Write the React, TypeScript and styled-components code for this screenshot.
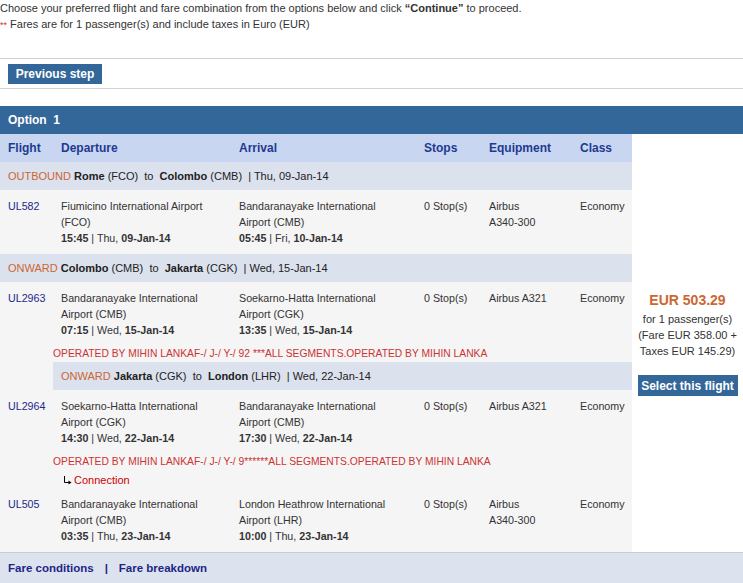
import React from 'react'
import styled, { createGlobalStyle } from 'styled-components'

const GlobalStyle = createGlobalStyle`
  body {
    margin: 0;
    background: #fff;
    font-family: "Liberation Sans", Arial, sans-serif;
    font-size: 11px;
    color: #333;
  }
`

const Page = styled.div`
  width: 743px;
`

const Intro = styled.div`
  line-height: 16px;
  color: #333;
  white-space: nowrap;
`

const Stars = styled.span`
  color: #cc3333;
  font-size: 9px;
`

const StepBar = styled.div`
  margin: 25px 0 17px;
  border-top: 1px solid #d2d2d2;
  border-bottom: 1px solid #d2d2d2;
  padding: 5px 8px 4px;
`

const BlueButton = styled.button<{ $w: number; $h: number }>`
  display: block;
  width: ${p => p.$w}px;
  height: ${p => p.$h}px;
  padding: 0;
  border: none;
  background: #336699;
  color: #fff;
  font-family: "Liberation Sans", Arial, sans-serif;
  font-size: 12px;
  font-weight: bold;
  cursor: pointer;
`

const OptionBar = styled.div`
  height: 28px;
  line-height: 28px;
  padding: 0 8px;
  background: #336699;
  color: #fff;
  font-size: 12px;
  font-weight: bold;
  white-space: pre;
`

const Body = styled.div`
  display: flex;
`

const Table = styled.div`
  width: 632px;
  background: #f5f5f5;
`

const Cols = styled.div`
  display: grid;
  grid-template-columns: 53px 178px 185px 65px 91px 52px;
  padding-left: 8px;
`

const HeadRow = styled(Cols)`
  height: 28px;
  align-items: center;
  background: #c8d6f2;
  color: #1f3a8f;
  font-size: 12px;
  font-weight: bold;
`

const FlightRow = styled(Cols)`
  padding: 8px 0 8px 8px;
  line-height: 16px;
  font-size: 10.7px;
  align-items: start;
  white-space: nowrap;
`

const FlightNo = styled.span`
  color: #24288c;
`

const SegmentHeader = styled.div<{ $inset?: boolean }>`
  height: 28px;
  line-height: 28px;
  margin-left: ${p => (p.$inset ? '53px' : '0')};
  padding-left: 8px;
  background: #dce1ee;
  color: #222;
  white-space: pre;
`

const Kind = styled.span`
  color: #cc6633;
`

const Note = styled.div`
  padding-left: 53px;
  line-height: 16px;
  font-size: 10.3px;
  color: #cc3333;
  white-space: nowrap;
`

const Connection = styled.div`
  margin-top: 2px;
  padding-left: 63px;
  line-height: 16px;
  color: #cc0000;
  display: flex;
  align-items: center;
  gap: 2px;
`

const PriceCol = styled.div`
  flex: 1;
  display: flex;
  flex-direction: column;
  align-items: center;
  justify-content: center;
  text-align: center;
  line-height: 16px;
  color: #333;
`

const Price = styled.div`
  color: #cc6633;
  font-size: 14px;
  font-weight: bold;
  line-height: 20px;
  margin-bottom: 1px;
`

const SelectWrap = styled.div`
  margin-top: 16px;
`

const Footer = styled.div`
  height: 30px;
  border-top: 1px solid #cccccc;
  background: #dde2ef;
  display: flex;
  align-items: center;
  padding: 0 8px;
  font-size: 11.5px;
  font-weight: bold;
  color: #1c2686;
`

const Sep = styled.span`
  margin: 0 11px;
`

interface Flight {
  no: string
  dep: string[]
  depTime: string
  depDay: string
  depDate: string
  arr: string[]
  arrTime: string
  arrDay: string
  arrDate: string
  equip: string[]
}

function TimeLine({ time, day, date }: { time: string; day: string; date: string }) {
  return (
    <div>
      <b>{time}</b>{'  | '}{day}, <b>{date}</b>
    </div>
  )
}

function Row({ f }: { f: Flight }) {
  return (
    <FlightRow>
      <FlightNo>{f.no}</FlightNo>
      <div>
        {f.dep.map(l => <div key={l}>{l}</div>)}
        <TimeLine time={f.depTime} day={f.depDay} date={f.depDate} />
      </div>
      <div>
        {f.arr.map(l => <div key={l}>{l}</div>)}
        <TimeLine time={f.arrTime} day={f.arrDay} date={f.arrDate} />
      </div>
      <div>0 Stop(s)</div>
      <div>{f.equip.map(l => <div key={l}>{l}</div>)}</div>
      <div>Economy</div>
    </FlightRow>
  )
}

function Segment({ kind, from, fromCode, to, toCode, date, inset }: {
  kind: string; from: string; fromCode: string; to: string; toCode: string; date: string; inset?: boolean
}) {
  return (
    <SegmentHeader $inset={inset}>
      <Kind>{kind}</Kind>{' '}<b>{from}</b>{` (${fromCode})  to  `}<b>{to}</b>{` (${toCode})  | ${date}`}
    </SegmentHeader>
  )
}

const CMB = ['Bandaranayake International', 'Airport (CMB)']
const CGK = ['Soekarno-Hatta International', 'Airport (CGK)']

export default function App() {
  return (
    <Page>
      <GlobalStyle />
      <Intro>
        <div>Choose your preferred flight and fare combination from the options below and click <b>“Continue”</b> to proceed.</div>
        <div><Stars>**</Stars> Fares are for 1 passenger(s) and include taxes in Euro (EUR)</div>
      </Intro>

      <StepBar>
        <BlueButton $w={94} $h={20}>Previous step</BlueButton>
      </StepBar>

      <OptionBar>Option  1</OptionBar>

      <Body>
        <Table>
          <HeadRow>
            <div>Flight</div>
            <div>Departure</div>
            <div>Arrival</div>
            <div>Stops</div>
            <div>Equipment</div>
            <div>Class</div>
          </HeadRow>

          <Segment kind="OUTBOUND" from="Rome" fromCode="FCO" to="Colombo" toCode="CMB" date="Thu, 09-Jan-14" />
          <Row f={{
            no: 'UL582', dep: ['Fiumicino International Airport', '(FCO)'], depTime: '15:45', depDay: 'Thu', depDate: '09-Jan-14',
            arr: CMB, arrTime: '05:45', arrDay: 'Fri', arrDate: '10-Jan-14', equip: ['Airbus', 'A340-300'],
          }} />

          <Segment kind="ONWARD" from="Colombo" fromCode="CMB" to="Jakarta" toCode="CGK" date="Wed, 15-Jan-14" />
          <Row f={{
            no: 'UL2963', dep: CMB, depTime: '07:15', depDay: 'Wed', depDate: '15-Jan-14',
            arr: CGK, arrTime: '13:35', arrDay: 'Wed', arrDate: '15-Jan-14', equip: ['Airbus A321'],
          }} />
          <Note>OPERATED BY MIHIN LANKAF-/ J-/ Y-/ 92 ***ALL SEGMENTS.OPERATED BY MIHIN LANKA</Note>

          <Segment inset kind="ONWARD" from="Jakarta" fromCode="CGK" to="London" toCode="LHR" date="Wed, 22-Jan-14" />
          <Row f={{
            no: 'UL2964', dep: CGK, depTime: '14:30', depDay: 'Wed', depDate: '22-Jan-14',
            arr: CMB, arrTime: '17:30', arrDay: 'Wed', arrDate: '22-Jan-14', equip: ['Airbus A321'],
          }} />
          <Note>OPERATED BY MIHIN LANKAF-/ J-/ Y-/ 9******ALL SEGMENTS.OPERATED BY MIHIN LANKA</Note>
          <Connection>
            <svg width="9" height="9" viewBox="0 0 9 9">
              <path d="M1.5 0 V6.5 H6" stroke="#000" strokeWidth="1" fill="none" />
              <polygon points="5.5,4.5 8.5,6.5 5.5,8.5" fill="#000" />
            </svg>
            Connection
          </Connection>

          <Row f={{
            no: 'UL505', dep: CMB, depTime: '03:35', depDay: 'Thu', depDate: '23-Jan-14',
            arr: ['London Heathrow International', 'Airport (LHR)'], arrTime: '10:00', arrDay: 'Thu', arrDate: '23-Jan-14',
            equip: ['Airbus', 'A340-300'],
          }} />
        </Table>

        <PriceCol>
          <Price>EUR 503.29</Price>
          <div>for 1 passenger(s)</div>
          <div>(Fare EUR 358.00 +</div>
          <div>Taxes EUR 145.29)</div>
          <SelectWrap>
            <BlueButton $w={100} $h={21}>Select this flight</BlueButton>
          </SelectWrap>
        </PriceCol>
      </Body>

      <Footer>
        <span>Fare conditions</span>
        <Sep>|</Sep>
        <span>Fare breakdown</span>
      </Footer>
    </Page>
  )
}
